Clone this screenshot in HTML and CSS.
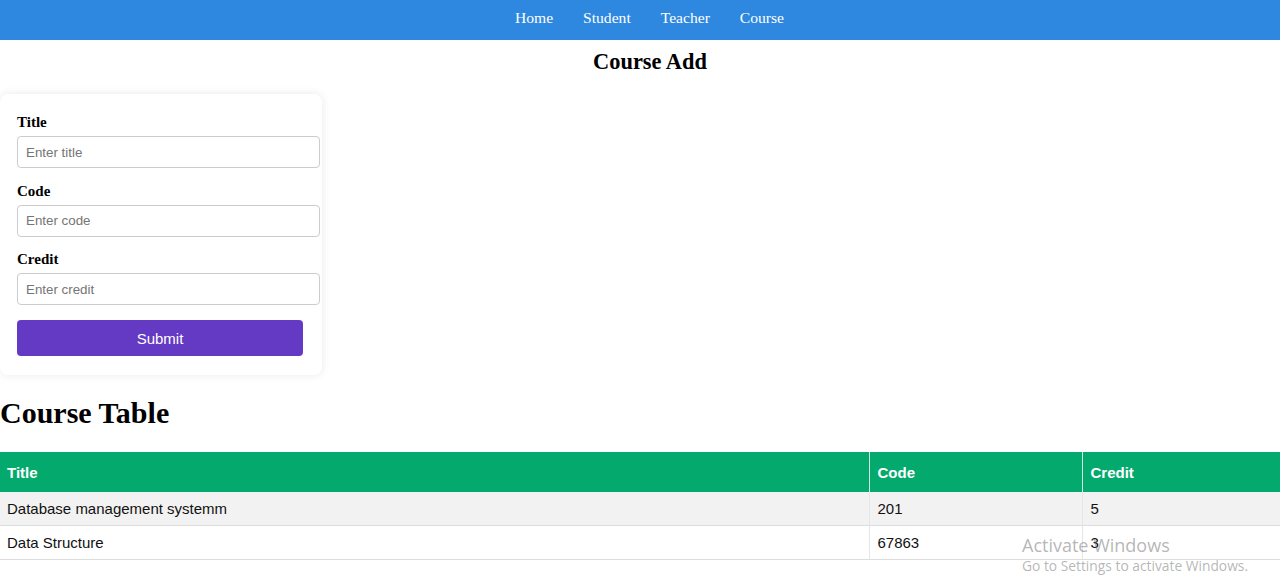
FILE: index.html
```html
<!DOCTYPE html>
<html>
<head>
<meta charset="utf-8">
<link rel="stylesheet" href="styles.css">
</head>
<body>
<nav class="navbar">
  <a href="#">Home</a>
  <a href="#">Student</a>
  <a href="#">Teacher</a>
  <a href="#">Course</a>
</nav>
<h2 class="page-title">Course Add</h2>
<form class="card">
  <label class="field-label">Title</label>
  <input class="field-input" type="text" placeholder="Enter title">
  <label class="field-label">Code</label>
  <input class="field-input" type="text" placeholder="Enter code">
  <label class="field-label">Credit</label>
  <input class="field-input" type="text" placeholder="Enter credit">
  <button class="submit-btn" type="button">Submit</button>
</form>
<h1 class="table-title">Course Table</h1>
<table class="course-table">
  <thead>
    <tr><th class="col-title">Title</th><th class="col-code">Code</th><th>Credit</th></tr>
  </thead>
  <tbody>
    <tr><td>Database management systemm</td><td>201</td><td>5</td></tr>
    <tr><td>Data Structure</td><td>67863</td><td>3</td></tr>
  </tbody>
</table>
<div class="watermark">
  <div class="wm-big">Activate Windows</div>
  <div class="wm-small">Go to Settings to activate Windows.</div>
</div>
</body>
</html>
```
FILE: styles.css
```css
html, body {
  margin: 0;
  padding: 0;
  background: #fff;
  font-family: "Liberation Serif", "Times New Roman", serif;
  color: #000;
}
.navbar {
  height: 40px;
  background: #2f88df;
  display: flex;
  justify-content: center;
  align-items: center;
  gap: 30px;
  padding: 0 0 4px 19px;
  box-sizing: border-box;
}
.navbar a {
  color: #fff;
  text-decoration: none;
  font-size: 15.6px;
}
.page-title {
  text-align: center;
  font-size: 22.4px;
  font-weight: bold;
  margin: 9px 0 19px 0;
  padding-left: 20px;
}
.card {
  width: 322px;
  box-sizing: border-box;
  padding: 20px 2px 19px 17px;
  border-radius: 8px;
  box-shadow: 0 0 10px rgba(0, 0, 0, 0.09);
  display: flex;
  flex-direction: column;
  align-items: flex-start;
  background: #fff;
}
.field-label {
  font-weight: bold;
  font-size: 15px;
  line-height: 17px;
  margin-bottom: 5px;
}
.field-input {
  width: 303px;
  height: 32px;
  box-sizing: border-box;
  border: 1px solid #ccc;
  border-radius: 4px;
  padding: 0 8px;
  font-family: "Liberation Sans", Arial, sans-serif;
  font-size: 13.33px;
  margin: 0 0 14.5px 0;
}
.field-input::placeholder {
  color: #757575;
}
.submit-btn {
  width: 286px;
  height: 36px;
  border: none;
  border-radius: 4px;
  background: #6439c4;
  color: #fff;
  font-family: "Liberation Sans", Arial, sans-serif;
  font-size: 15px;
  margin-top: 0.5px;
}
.table-title {
  font-size: 30px;
  font-weight: bold;
  margin: 21px 0 22px 0;
  line-height: 34px;
}
.course-table {
  width: 100%;
  border-collapse: collapse;
  font-family: "Liberation Sans", Arial, sans-serif;
  font-size: 15px;
}
.course-table th {
  background: #04a96d;
  color: #fff;
  text-align: left;
  font-weight: bold;
  height: 40px;
  padding: 0 8px;
  box-sizing: border-box;
  border-left: 1px solid #d8eee4;
}
.course-table th:first-child, .course-table td:first-child {
  border-left: none;
  padding-left: 7px;
}
.course-table .col-title { width: 869px; }
.course-table .col-code { width: 213px; }
.course-table td {
  padding: 0 8px;
  height: 33px;
  border-bottom: 1px solid #ddd;
  border-left: 1px solid #e6e6e6;
  color: #111;
}
.course-table tbody tr:nth-child(odd) td {
  background: #f2f2f2;
}
.watermark {
  position: absolute;
  left: 1022px;
  top: 534px;
  font-family: "Open Sans", "DejaVu Sans", sans-serif;
  color: rgba(120, 120, 120, 0.55);
  pointer-events: none;
}
.wm-big {
  font-size: 18px;
  line-height: 22px;
}
.wm-small {
  font-size: 13.8px;
  line-height: 20px;
}
```
